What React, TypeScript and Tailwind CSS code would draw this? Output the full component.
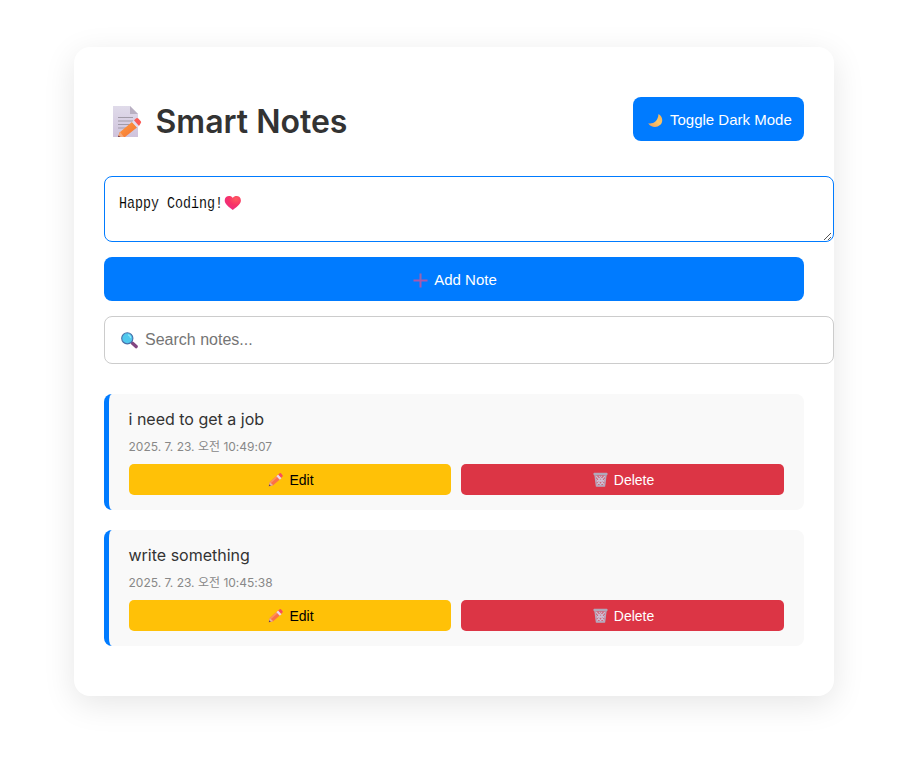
import React from 'react';

function MemoIcon() {
  return (
    <svg width="32" height="34" viewBox="0 0 32 34" className="block shrink-0">
      <defs>
        <linearGradient id="page" x1="0" y1="0" x2="0" y2="1">
          <stop offset="0" stopColor="#e0dbea" />
          <stop offset="1" stopColor="#cfc3dc" />
        </linearGradient>
        <linearGradient id="wood" x1="0" y1="0" x2="1" y2="1">
          <stop offset="0" stopColor="#ffa044" />
          <stop offset="1" stopColor="#f47030" />
        </linearGradient>
      </defs>
      <path d="M1 1h17l8 8v23H1z" fill="url(#page)" />
      <path d="M18 1v8h8z" fill="#b9b0c2" />
      <path d="M6 12.500h15M6 16h15M6 19.500h14M6 23h9" stroke="#a19ba8" strokeWidth="1.100" />
      <path d="M7.500 27.500L20 17l5 5.500L13 32H6z" fill="url(#wood)" />
      <path d="M8 27L6 32h6z" fill="#f5a97a" />
      <path d="M6.500 30.500L6 32h2.500z" fill="#6d3c50" />
      <path d="M20 17l2-1.700 5 5.700-2 1.500z" fill="#e5dced" />
      <path d="M22 15.300l2.300-2q1-.7 2 .3l2.500 2.700q.8 1-.1 1.900L27 21z" fill="#fb5a55" />
    </svg>
  );
}

function HeartIcon() {
  return (
    <svg width="18" height="16" viewBox="0 0 18 16" className="block">
      <defs>
        <radialGradient id="heart" cx=".7" cy=".2" r=".9">
          <stop offset="0" stopColor="#ff5a60" />
          <stop offset=".5" stopColor="#f83267" />
          <stop offset="1" stopColor="#e92c8b" />
        </radialGradient>
      </defs>
      <path d="M8.800 2.900C6.800-.1.700.4.700 5.500c0 4 5 7 8.100 9.600 3-2.600 8.100-5.600 8.100-9.600 0-5.100-6.100-5.600-8.100-2.600z" fill="url(#heart)" />
    </svg>
  );
}

function MoonIcon() {
  return (
    <svg width="15" height="15" viewBox="0 0 15 15" className="block">
      <defs>
        <linearGradient id="moon" x1="0" y1="1" x2="1" y2="0">
          <stop offset="0" stopColor="#e99a5c" />
          <stop offset=".55" stopColor="#fcc666" />
          <stop offset="1" stopColor="#f1ad55" />
        </linearGradient>
      </defs>
      <path d="M10.500 1c4.500 2.500 4.900 8.200 1.500 11.100C8.600 15.200 2.700 14.500.2 10.200c4.600.9 9.800-1.200 10.300-9.200z" fill="url(#moon)" />
    </svg>
  );
}

function PlusIcon() {
  return (
    <svg width="15" height="15" viewBox="0 0 15 15" className="block">
      <path d="M7.500.500v14M.5 7.500h14" stroke="#ab58ab" strokeWidth="2" />
      <path d="M7.500 1v6" stroke="#8a70b0" strokeWidth=".8" />
    </svg>
  );
}

function SearchIcon() {
  return (
    <svg width="17" height="17" viewBox="0 0 17 17" className="block">
      <path d="M9.500 9.500l2.200 2" stroke="#655b7b" strokeWidth="2" />
      <path d="M11.500 11.300l3.600 3.300" stroke="#824681" strokeWidth="3.400" strokeLinecap="round" />
      <circle cx="6.300" cy="6.300" r="5.600" fill="#50c8ed" stroke="#4a6fa8" strokeWidth="1.100" />
      <path d="M7.500 3q2 .6 2 2.500" fill="none" stroke="#8ae8fb" strokeWidth="1.400" strokeLinecap="round" />
    </svg>
  );
}

function PencilIcon() {
  return (
    <svg width="15" height="15" viewBox="0 0 15 15" className="block">
      <path d="M.8 14.200l1-4.300L10 2.800l3.200 3.500-8 7z" fill="#fb7048" />
      <path d="M1.800 9.900L8.300 4.300l1.100 1.200-6.600 5.700z" fill="#ff9159" />
      <path d="M.8 14.200l1-4.300 3.400 3.400z" fill="#e7b29b" />
      <path d="M.8 14.200l.4-2 1.700 1.500z" fill="#63405a" />
      <path d="M8.400 4.200L10.200 2.600l3.300 3.700-1.700 1.500z" fill="#eadcec" />
      <path d="M10.200 2.600l1.500-1.300q.8-.7 1.500.1l1.200 1.500q.8 1-.1 1.800l-1 1z" fill="#f84d5d" />
    </svg>
  );
}

function TrashIcon() {
  return (
    <svg width="15" height="15" viewBox="0 0 15 15" className="block">
      <path d="M1.800 3h11.400l-1.300 11H3.100z" fill="#d06578" />
      <path d="M3 4l8.500 9M6 4l5.500 6M2.800 7l6 7M12 4l-8.500 9M9 4l-5.500 6M12.200 7l-6 7" stroke="#cdbfd4" strokeWidth="1.100" />
      <path d="M2 3l1.400 10.800h8.200L13 3" fill="none" stroke="#b4a9bd" strokeWidth="1.300" />
      <rect x=".5" y=".8" width="14" height="2.500" rx=".7" fill="#b0a8ba" />
      <path d="M3.200 13.800h8.600" stroke="#b4a9bd" strokeWidth="1.500" />
    </svg>
  );
}

const notes = [
  { text: 'i need to get a job', date: '2025. 7. 23. 오전 10:49:07' },
  { text: 'write something', date: '2025. 7. 23. 오전 10:45:38' },
];

function Note({ text, date }: { text: string; date: string }) {
  return (
    <article className="h-[116px] rounded-lg border-l-[5px] border-[#007bff] bg-[#f9f9f9] pl-5 pr-5 pt-[14px]">
      <p className="-ml-[0.500px] h-[22px] text-[16px] leading-[22px] text-[#333]">{text}</p>
      <p className="-ml-[0.500px] mt-2 h-[18px] font-['Inter','Noto_Sans_CJK_KR',sans-serif] text-[12px] leading-[18px] text-[#888]">{date}</p>
      <div className="mt-2 grid grid-cols-[322px_323px] gap-[10px] font-['Liberation_Sans',sans-serif] text-[14px]">
        <button className="flex h-[31px] items-center justify-center gap-[6px] rounded-[5px] bg-[#ffc107] pl-[2px] text-black">
          <PencilIcon />
          <span className="pt-px">Edit</span>
        </button>
        <button className="flex h-[31px] items-center justify-center gap-[6px] rounded-[5px] bg-[#dc3545] pl-[2px] text-white">
          <TrashIcon />
          <span className="pt-px">Delete</span>
        </button>
      </div>
    </article>
  );
}

export default function App() {
  return (
    <div className="min-h-[768px] overflow-hidden bg-white pl-[74px] pt-[47px] font-['Inter',sans-serif]">
      <main className="h-[649px] w-[760px] rounded-2xl bg-white px-[30px] pt-[50px] shadow-[0_8px_32px_rgba(0,0,0,0.1)]">
        <header className="flex h-11 items-center justify-between">
          <h1 className="flex items-center gap-[11.500px] pl-2 pt-[5px] text-[32px] font-semibold leading-10 text-[#333]">
            <MemoIcon />
            <span>Smart Notes</span>
          </h1>
          <button className="flex h-11 w-[171px] items-center gap-[6px] rounded-lg bg-[#007bff] pl-[15px] pt-[2px] font-['Liberation_Sans',sans-serif] text-[15px] text-white">
            <MoonIcon />
            <span className="whitespace-nowrap pl-px">Toggle Dark Mode</span>
          </button>
        </header>
        <div className="relative mt-[35px] flex h-[66px] w-[730px] rounded-lg border border-[#007bff] bg-white pl-[14px] pt-[18px]">
          <span className="w-[105px] origin-left scale-x-[0.784] whitespace-nowrap font-['Liberation_Mono',monospace] text-[17px] leading-[17px] text-black [-webkit-text-stroke:0.100px_white]">Happy Coding!</span>
          <HeartIcon />
          <svg width="9" height="9" viewBox="0 0 9 9" className="absolute bottom-0 right-px">
            <path d="M1 8L8 1M5 8l3-3" stroke="#555" strokeWidth="1" />
          </svg>
        </div>
        <button className="mt-[15px] flex h-11 w-full items-center justify-center gap-[6px] rounded-lg bg-[#007bff] pl-[2px] pt-[2px] font-['Liberation_Sans',sans-serif] text-[15px] text-white">
          <PlusIcon />
          <span>Add Note</span>
        </button>
        <div className="mt-[15px] flex h-12 w-[730px] items-center gap-[7px] rounded-lg border border-[#ccc] bg-white pl-4 font-['Liberation_Sans',sans-serif] text-[16px] text-[#757575]">
          <SearchIcon />
          <span>Search notes...</span>
        </div>
        <section className="mt-[30px] flex flex-col gap-5">
          {notes.map((note) => (
            <Note key={note.date} {...note} />
          ))}
        </section>
      </main>
    </div>
  );
}
